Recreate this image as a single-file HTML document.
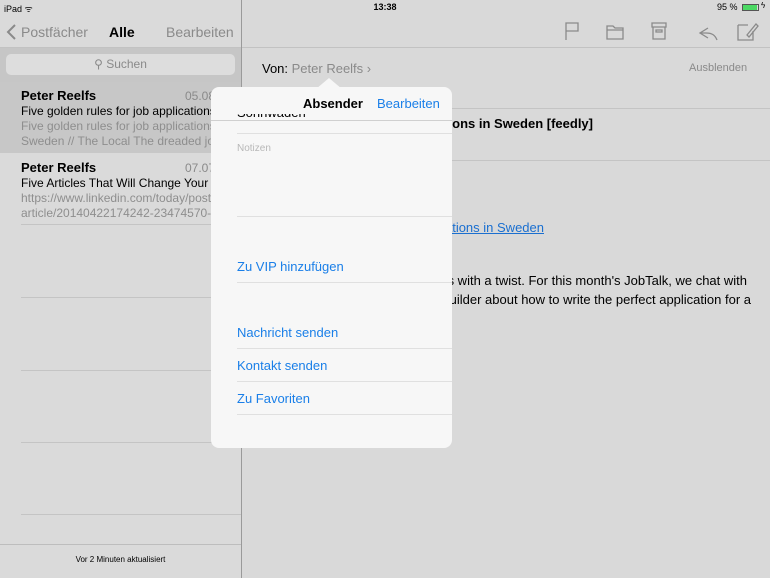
<!DOCTYPE html>
<html><head><meta charset="utf-8"><style>
*{margin:0;padding:0;box-sizing:border-box}
body{width:770px;height:578px;overflow:hidden;background:#d9d9d9;font-family:"Liberation Sans",sans-serif;position:relative;color:#000}
.a{position:absolute;white-space:nowrap}
.hl{position:absolute;height:1px;background:#c4c4c4}
.blue{color:#1a7fe8}
</style></head><body>
<div class="a" style="left:0;top:0;width:241px;height:578px;background:#dadada"></div>
<div class="a" style="left:241px;top:0;width:1px;height:578px;background:#9a9a9a"></div>
<div class="hl" style="left:0;top:47px;width:241px;background:#c2c2c2"></div>
<div class="hl" style="left:242px;top:47px;width:528px;background:#c2c2c2"></div>
<div class="a" style="left:4px;top:2px;font-size:9px">iPad <span style="font-size:9px">ᯤ</span></div>
<div class="a" style="left:372px;top:2px;font-size:9px;font-weight:bold;width:26px;text-align:center">13:38</div>
<div class="a" style="left:717px;top:2px;font-size:9px">95 %</div>
<div class="a" style="left:742px;top:4px;width:17px;height:7px;border:1px solid #555;"><div style="width:14px;height:5px;background:#4cd964"></div></div>
<div class="a" style="left:761px;top:1px;font-size:8px">ϟ</div>
<svg class="a" style="left:5px;top:24px" width="12" height="16"><path d="M10 1 L3 8 L10 15" stroke="#8a8a8a" stroke-width="2" fill="none"/></svg>
<div class="a" style="left:21px;top:24px;font-size:14px;color:#8a8a8a">Postfächer</div>
<div class="a" style="left:109px;top:24px;font-size:14px;font-weight:bold">Alle</div>
<div class="a" style="left:166px;top:24px;font-size:14px;color:#8a8a8a">Bearbeiten</div>
<div class="a" style="left:0;top:48px;width:241px;height:34px;background:#c6c6c6"></div>
<div class="a" style="left:6px;top:54px;width:229px;height:21px;background:#dddddd;border-radius:5px;text-align:center;font-size:12px;color:#8a8a8a;line-height:21px">⚲ Suchen</div>
<div class="a" style="left:0;top:82px;width:241px;height:71px;background:#c7c7c7"></div>
<div class="a" style="left:21px;top:88px;font-size:13px;font-weight:bold">Peter Reelfs</div>
<div class="a" style="left:185px;top:89px;font-size:12px;color:#8a8a8a">05.08</div>
<div class="a" style="left:21px;top:104px;font-size:12px">Five golden rules for job applications</div>
<div class="a" style="left:21px;top:119px;font-size:12px;color:#8e8e8e">Five golden rules for job applications</div>
<div class="a" style="left:21px;top:134px;font-size:12px;color:#8e8e8e">Sweden // The Local The dreaded job</div>
<div class="a" style="left:21px;top:160px;font-size:13px;font-weight:bold">Peter Reelfs</div>
<div class="a" style="left:185px;top:161px;font-size:12px;color:#8a8a8a">07.07</div>
<div class="a" style="left:21px;top:176px;font-size:12px">Five Articles That Will Change Your W</div>
<div class="a" style="left:21px;top:191px;font-size:12px;color:#8e8e8e">https://www.linkedin.com/today/post</div>
<div class="a" style="left:21px;top:206px;font-size:12px;color:#8e8e8e">article/20140422174242-23474570-fi</div>
<div class="hl" style="left:21px;top:224px;width:220px"></div>
<div class="hl" style="left:21px;top:297px;width:220px"></div>
<div class="hl" style="left:21px;top:370px;width:220px"></div>
<div class="hl" style="left:21px;top:442px;width:220px"></div>
<div class="hl" style="left:21px;top:514px;width:220px"></div>
<div class="hl" style="left:0;top:544px;width:241px;background:#bdbdbd"></div>
<div class="a" style="left:0;top:555px;width:241px;text-align:center;font-size:8px">Vor 2 Minuten aktualisiert</div>
<svg class="a" style="left:560px;top:20px" width="200" height="22" fill="none" stroke="#8a8a8a" stroke-width="1.3">
<path d="M6 20 V3 H18 V11 H6"/>
<path d="M47 6 H53 L55 8 H63 V19 H47 Z M47 10 H63"/>
<path d="M92 3 H106 V7 H92 Z M93 7 V19 H105 V7 M96 10 H102 V12 H96 Z"/>
<path d="M148 8 L140 13 L148 18 M140 13 H146 C152 13 155 15 157 20"/>
<path d="M178 5 H188 M178 5 V20 H193 V11 M187 15 L196 4 L198 6 L189 17 Z"/>
</svg>
<div class="a" style="left:262px;top:61px;font-size:13px">Von: <span style="color:#8a8a8a">Peter Reelfs ›</span></div>
<div class="a" style="left:689px;top:62px;font-size:11px;color:#8a8a8a">Ausblenden</div>
<div class="hl" style="left:262px;top:108px;width:508px"></div>
<div class="a" style="right:177px;top:116px;font-size:13px;font-weight:bold">Five golden rules for job applications in Sweden [feedly]</div>
<div class="hl" style="left:242px;top:160px;width:528px"></div>
<div class="a" style="right:226px;top:220px;font-size:13px;color:#1a6fd0;text-decoration:underline">Five golden rules for job applications in Sweden</div>
<div class="a" style="right:23px;top:273px;font-size:13px">Five golden rules for job applications with a twist. For this month's JobTalk, we chat with</div>
<div class="a" style="right:19px;top:292px;font-size:13px">Swedish recruiter and CV builder about how to write the perfect application for a</div>
<svg class="a" style="left:316px;top:78px" width="26" height="11"><path d="M0 11 L13 0 L26 11 Z" fill="#f7f7f7"/></svg>
<div class="a" style="left:211px;top:87px;width:241px;height:361px;background:#f7f7f7;border-radius:8px;overflow:hidden">
<div class="a" style="left:92px;top:9px;font-size:13px;font-weight:bold">Absender</div>
<div class="a blue" style="left:166px;top:9px;font-size:13px">Bearbeiten</div>
<div class="a" style="left:26px;top:27px;width:150px;height:6px;overflow:hidden"><div style="font-size:13px;margin-top:-9px">Sonnwaden</div></div>
<div class="a" style="left:0;top:33px;width:241px;height:1px;background:#d0d0d0"></div>
<div class="hl" style="left:26px;top:46px;width:215px;background:#e0e0e0"></div>
<div class="a" style="left:26px;top:56px;font-size:10px;color:#b8b8b8">Notizen</div>
<div class="hl" style="left:26px;top:129px;width:215px;background:#e0e0e0"></div>
<div class="a blue" style="left:26px;top:172px;font-size:13px">Zu VIP hinzufügen</div>
<div class="hl" style="left:26px;top:195px;width:215px;background:#e0e0e0"></div>
<div class="a blue" style="left:26px;top:238px;font-size:13px">Nachricht senden</div>
<div class="hl" style="left:26px;top:261px;width:215px;background:#e0e0e0"></div>
<div class="a blue" style="left:26px;top:271px;font-size:13px">Kontakt senden</div>
<div class="hl" style="left:26px;top:294px;width:215px;background:#e0e0e0"></div>
<div class="a blue" style="left:26px;top:304px;font-size:13px">Zu Favoriten</div>
<div class="hl" style="left:26px;top:327px;width:215px;background:#e0e0e0"></div>
</div>
</body></html>
